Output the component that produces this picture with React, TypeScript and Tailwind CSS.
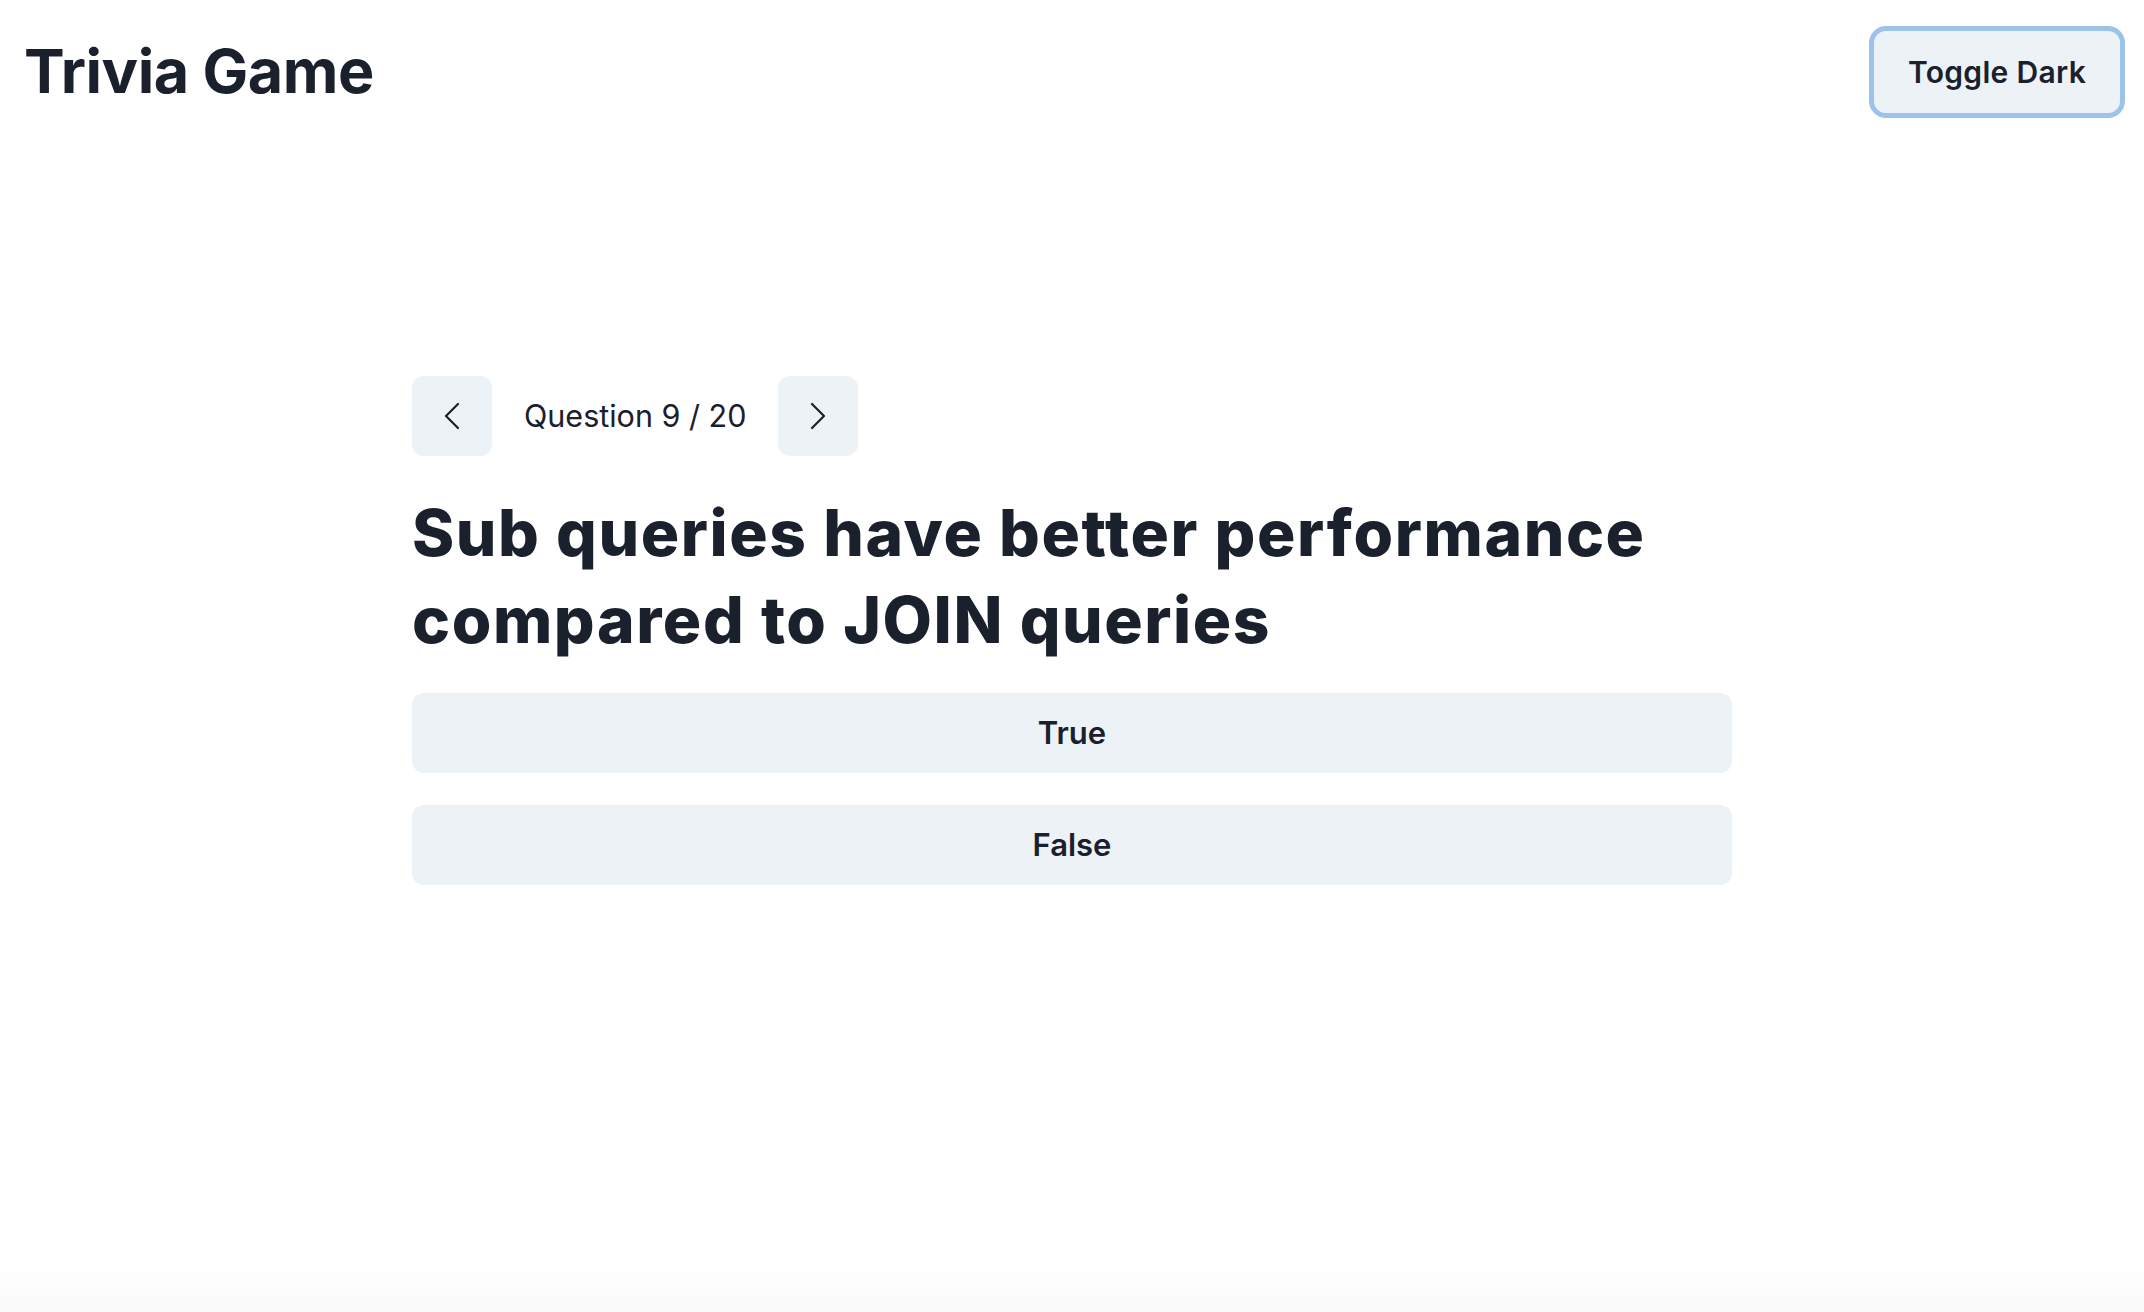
import { ChevronLeft, ChevronRight } from "lucide-react";

const font = "font-['Inter','Noto_Sans',sans-serif]";

const AnswerButton = ({ label }: { label: string }) => {
  return (
    <button className="flex h-[80px] w-full items-center justify-center rounded-[12px] bg-[#edf2f7] text-[31px] font-semibold text-[#1a202c]">
      {label}
    </button>
  );
};

const NavButton = ({ dir }: { dir: "prev" | "next" }) => {
  return (
    <button className="flex h-[80px] w-[80px] items-center justify-center rounded-[12px] bg-[#edf2f7] text-[#1a202c]">
      {dir === "prev" ? (
        <ChevronLeft size={48} strokeWidth={1.1} />
      ) : (
        <ChevronRight size={48} strokeWidth={1.1} />
      )}
    </button>
  );
};

const App = () => {
  return (
    <div
      className={`${font} min-h-screen bg-[linear-gradient(to_bottom,#ffffff_96%,#fafafa)] text-[#1a202c]`}
    >
      <header className="flex h-[144px] items-center justify-between px-6">
        <h1 className="text-[61px] font-bold tracking-[-0.5px]">Trivia Game</h1>
        <button className="h-[82px] w-[246px] rounded-[12px] bg-[#edf2f7] text-[30px] font-semibold tracking-[0.3px] outline-[5px] outline-solid outline-[#9cc4ea]">
          Toggle Dark
        </button>
      </header>

      <main className="mx-auto mt-[232px] flex w-[1320px] flex-col">
        <div className="flex items-center gap-[32px]">
          <NavButton dir="prev" />
          <span className="text-[30.5px]">Question 9 / 20</span>
          <NavButton dir="next" />
        </div>

        <h2 className="mt-[33px] text-[64px] font-extrabold leading-[87px] tracking-[1.6px]">
          Sub queries have better performance compared to JOIN queries
        </h2>

        <div className="mt-[30px] flex flex-col gap-[32px]">
          <AnswerButton label="True" />
          <AnswerButton label="False" />
        </div>
      </main>
    </div>
  );
};

export default App;
